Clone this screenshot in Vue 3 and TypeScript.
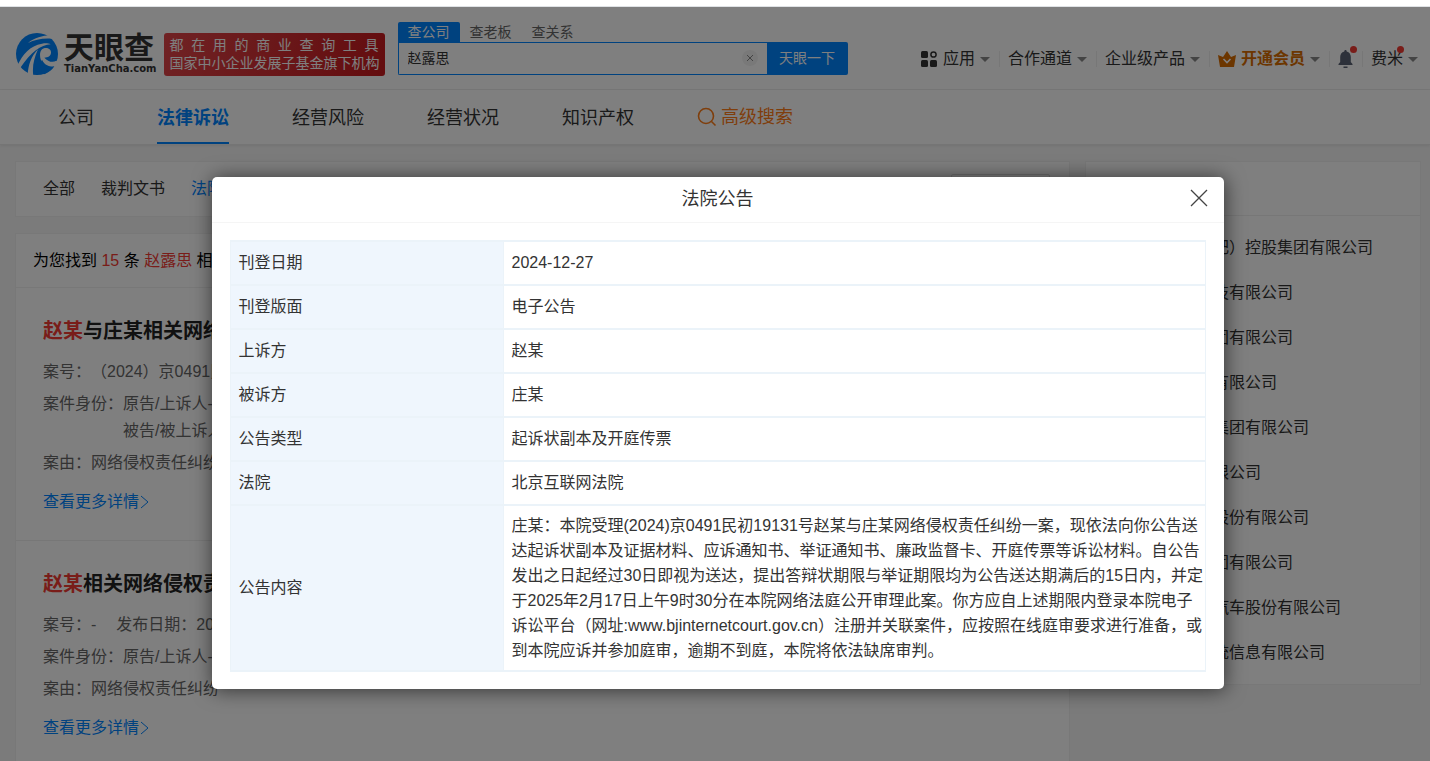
<script setup lang="ts">
import { ref } from 'vue'

interface CaseItem {
  rest: string
  meta: string[][]
  parties: string[]
}

const keyword = ref('赵露思')
const searchTabs = ['查公司', '查老板', '查关系']
const slogan = '都在用的商业查询工具'.split('')
const navItems = ['公司', '法律诉讼', '经营风险', '经营状况', '知识产权']
const filters = ['全部', '裁判文书', '法院公告']

const cases: CaseItem[] = [
  {
    rest: '与庄某相关网络侵权责任纠纷',
    meta: [['案号：', '（2024）京0491民初19131号']],
    parties: ['原告/上诉人-赵某', '被告/被上诉人-庄某'],
  },
  {
    rest: '相关网络侵权责任纠纷',
    meta: [['案号：', '-'], ['发布日期：', '2024-12-27']],
    parties: ['原告/上诉人-赵某'],
  },
]

const companies = [
  '某某新能源（合肥）控股集团有限公司',
  '某某网络信息科技有限公司',
  '某某投资控股集团有限公司',
  '某某某影视文化有限公司',
  '北京某某房地产集团有限公司',
  '某某科技发展有限公司',
  '上海某某半导体股份有限公司',
  '深圳某某控股集团有限公司',
  '重庆某某新能源汽车股份有限公司',
  '北京某某科技系统信息有限公司',
]

const details = [
  ['刊登日期', '2024-12-27'],
  ['刊登版面', '电子公告'],
  ['上诉方', '赵某'],
  ['被诉方', '庄某'],
  ['公告类型', '起诉状副本及开庭传票'],
  ['法院', '北京互联网法院'],
]

const notice = [
  '庄某：本院受理(2024)京0491民初19131号赵某与庄某网络侵权责任纠纷一案，现依法向你公告送',
  '达起诉状副本及证据材料、应诉通知书、举证通知书、廉政监督卡、开庭传票等诉讼材料。自公告',
  '发出之日起经过30日即视为送达，提出答辩状期限与举证期限均为公告送达期满后的15日内，并定',
  '于2025年2月17日上午9时30分在本院网络法庭公开审理此案。你方应自上述期限内登录本院电子',
  '诉讼平台（网址:www.bjinternetcourt.gov.cn）注册并关联案件，应按照在线庭审要求进行准备，或',
  '到本院应诉并参加庭审，逾期不到庭，本院将依法缺席审判。',
]
</script>

<template>
  <div class="window">
    <div class="strip"></div>
    <div class="page">
      <header class="top">
        <a class="logo" href="#" aria-label="天眼查">
          <svg class="mark" viewBox="6 6 126 126" aria-hidden="true">
            <circle cx="69" cy="69" r="63" fill="#0084ff" />
            <path d="M108 13 C86 14 62 20 42 36 C62 26 86 21 112 23 L126 12Z" fill="#fff" />
            <path d="M10 104 C26 70 48 44 84 38 C96 36 103 37 110 40 C80 42 52 62 18 112Z" fill="#fff" />
            <path d="M41 134 C42 104 51 76 72 55 C60 82 54 106 58 136Z" fill="#fff" />
            <path d="M84 55 C96 46 112 53 111 65 C110 75 102 79 91 80 C102 92 116 96 127 89 L136 98 L121 109 C100 110 84 101 80 85 C77 74 77 62 84 55Z" fill="#fff" />
            <path d="M84 86 C92 103 106 107 121 106 C113 119 99 128 89 130 C78 118 76 98 84 86Z" fill="#0084ff" />
          </svg>
          <span class="wordmark">
            <strong>天眼查</strong>
            <small>TianYanCha.com</small>
          </span>
        </a>
        <div class="banner">
          <div class="slogan"><span v-for="c in slogan" :key="c">{{ c }}</span></div>
          <div class="slogan"><span>国家中小企业发展子基金旗下机构</span></div>
        </div>
        <form class="search" @submit.prevent>
          <div class="search-tabs">
            <button v-for="(t, i) in searchTabs" :key="t" type="button" :class="{ on: i === 0 }">{{ t }}</button>
          </div>
          <div class="search-row">
            <div class="field">
              <input v-model="keyword" type="text" aria-label="搜索关键词" />
              <button class="clear" type="button" aria-label="清空" @click="keyword = ''">
                <svg viewBox="0 0 8 8"><path d="M1 1 L7 7 M7 1 L1 7" /></svg>
              </button>
            </div>
            <button class="go" type="submit">天眼一下</button>
          </div>
        </form>
        <div class="tools">
          <a class="tool" href="#">
            <svg class="apps" viewBox="0 0 16 16" aria-hidden="true">
              <rect x="0" y="0" width="7" height="7" rx="1.5" />
              <rect x="0" y="9" width="7" height="7" rx="1.5" />
              <rect x="9" y="9" width="7" height="7" rx="1.5" />
              <circle cx="12.5" cy="3.5" r="2.6" fill="none" stroke="#333" stroke-width="1.5" />
            </svg>
            应用<i class="caret"></i>
          </a>
          <a class="tool" href="#">合作通道<i class="caret"></i></a>
          <a class="tool" href="#">企业级产品<i class="caret"></i></a>
          <a class="tool vip" href="#">
            <svg class="crown" viewBox="0 0 18 16" aria-hidden="true">
              <path d="M0 4 L5 6 L9 0 L13 6 L18 4 L16 16 H2Z" />
              <path d="M5.500 8 L9 11.500 L12.500 8" fill="none" stroke="#fff" stroke-width="1.6" />
            </svg>
            开通会员<i class="caret"></i>
          </a>
          <a class="tool bell" href="#" aria-label="消息">
            <svg viewBox="0 0 14 18" aria-hidden="true">
              <path d="M7 0 C7.800 0 8.200 .6 8.200 1.400 C11 2 12.300 4.300 12.300 7 V12 L14 14 V15 H0 V14 L1.700 12 V7 C1.700 4.300 3 2 5.800 1.400 C5.800 .6 6.200 0 7 0Z M5 16.500 H9 V18 H5Z" />
            </svg>
            <b class="dot"></b>
          </a>
          <a class="tool user" href="#"><span class="name">费米<b class="dot"></b></span><i class="caret"></i></a>
        </div>
      </header>

      <nav class="nav">
        <a v-for="(n, i) in navItems" :key="n" href="#" :class="{ on: i === 1 }">{{ n }}</a>
        <a class="advanced" href="#">
          <svg viewBox="0 0 20 20" aria-hidden="true"><circle cx="9" cy="9" r="7.500" /><path d="M14.500 14.500 L18.500 18.500" /></svg>高级搜索
        </a>
      </nav>

      <div class="columns">
        <main>
          <section class="card filters">
            <a v-for="(f, i) in filters" :key="f" href="#" :class="{ on: i === 2 }">{{ f }}</a>
            <select aria-label="年份"><option>全部年份</option></select>
          </section>
          <section class="card results">
            <p class="summary">为您找到 <em>15</em> 条 <em>赵露思</em> 相关结果</p>
            <article v-for="(c, i) in cases" :key="i">
              <h2><em>赵某</em>{{ c.rest }}</h2>
              <div class="meta">
                <span v-for="m in c.meta" :key="m[0]" class="pair"><span>{{ m[0] }}</span><span>{{ m[1] }}</span></span>
              </div>
              <div class="meta">
                <span>案件身份：</span>
                <div><div v-for="p in c.parties" :key="p">{{ p }}</div></div>
              </div>
              <div class="meta"><span>案由：</span><span>网络侵权责任纠纷</span></div>
              <a class="more" href="#">查看更多详情<svg viewBox="0 0 9 14" aria-hidden="true"><path d="M1 1 L8 7 L1 13" /></svg></a>
            </article>
          </section>
        </main>
        <aside class="card">
          <div class="side-head"></div>
          <ul>
            <li v-for="c in companies" :key="c"><a href="#">{{ c }}</a></li>
          </ul>
        </aside>
      </div>

      <div class="overlay">
        <div class="modal" role="dialog" aria-modal="true" aria-labelledby="dialog-title">
          <div class="modal-head">
            <h1 id="dialog-title">法院公告</h1>
            <button class="close" type="button" aria-label="关闭">
              <svg viewBox="0 0 18 18"><path d="M1 1 L17 17 M17 1 L1 17" /></svg>
            </button>
          </div>
          <div class="modal-body">
            <table>
              <tbody>
                <tr v-for="d in details" :key="d[0]">
                  <th scope="row">{{ d[0] }}</th>
                  <td>{{ d[1] }}</td>
                </tr>
                <tr class="long">
                  <th scope="row">公告内容</th>
                  <td><div v-for="l in notice" :key="l">{{ l }}</div></td>
                </tr>
              </tbody>
            </table>
          </div>
        </div>
      </div>
    </div>
  </div>
</template>

<style>
body {
  margin: 0;
  overflow: hidden;
}
</style>

<style scoped>
* {
  box-sizing: border-box;
}
.window {
  height: 100vh;
  display: flex;
  flex-direction: column;
  overflow: hidden;
  font: 16px/24px "Liberation Sans", "Noto Sans CJK SC", sans-serif;
  color: #333;
}
.window a {
  color: inherit;
  text-decoration: none;
}
.window button,
.window input {
  font: inherit;
  border: 0;
  padding: 0;
}
.strip {
  flex: none;
  height: 7px;
  background: #fff;
  border-bottom: 1px solid #dfe2e5;
}
.page {
  flex: 1;
  min-height: 0;
  position: relative;
  overflow: hidden;
  background: #f7f7f7;
}
.top {
  height: 83px;
  display: flex;
  align-items: center;
  padding: 0 12px 0 16px;
  background: #fff;
  border-bottom: 1px solid #eee;
  white-space: nowrap;
}
.logo {
  display: flex;
  align-items: center;
  gap: 6px;
  margin-top: 12px;
}
.mark {
  width: 42px;
  height: 42px;
}
.wordmark {
  display: flex;
  flex-direction: column;
}
.wordmark strong {
  font-size: 30px;
  line-height: 30px;
}
.wordmark small {
  font: bold 10px/12px "DejaVu Sans", sans-serif;
}
.banner {
  width: 221px;
  margin: 12px 13px 0 7px;
  padding: 3px 6px 4px;
  border-radius: 3px;
  background: linear-gradient(100deg, #e04448, #c81a1e);
  color: #fff;
  font-size: 14px;
  line-height: 18px;
}
.slogan {
  display: flex;
  justify-content: space-between;
}
.search {
  width: 450px;
}
.search-tabs {
  display: flex;
  height: 20px;
}
.search .search-tabs button {
  width: 62px;
  background: none;
  color: #666;
  font-size: 14px;
  line-height: 18px;
  border-radius: 2px 2px 0 0;
}
.search .search-tabs .on {
  background: #0084ff;
  color: #fff;
}
.search-row {
  display: flex;
  height: 33px;
}
.field {
  flex: 1;
  display: flex;
  align-items: center;
  padding: 0 9px;
  border: 1px solid #0084ff;
  border-right: 0;
  border-radius: 0 0 0 2px;
}
.field input {
  flex: 1;
  min-width: 0;
  font-size: 14px;
  color: #333;
  background: none;
  outline: 0;
}
.field .clear {
  width: 16px;
  height: 16px;
  display: grid;
  place-items: center;
  border-radius: 50%;
  background: #f3f3f3;
}
.clear svg {
  width: 8px;
  height: 8px;
  stroke: #888;
}
.search .go {
  width: 81px;
  background: #0084ff;
  color: #fff;
  font-size: 14px;
  border-radius: 0 2px 2px 0;
}
.tools {
  margin: 22px 0 0 auto;
  display: flex;
  align-items: center;
}
.tool {
  display: flex;
  align-items: center;
}
.tool + .tool {
  margin-left: 9px;
  padding-left: 9px;
  background: linear-gradient(#eee, #eee) left / 1px 16px no-repeat;
}
.caret {
  margin-left: 5px;
  border: 5px solid transparent;
  border-top-color: #888;
  border-bottom: 0;
}
.apps {
  width: 16px;
  height: 16px;
  margin-right: 6px;
  fill: #333;
}
.tools .vip {
  color: #d96c00;
  font-weight: bold;
}
.crown {
  width: 18px;
  height: 16px;
  margin-right: 5px;
  fill: #d96c00;
}
.bell svg {
  width: 15px;
  height: 18px;
  fill: #5b6374;
}
.bell,
.name {
  position: relative;
}
.dot {
  position: absolute;
  top: -4px;
  right: -4px;
  width: 7px;
  height: 7px;
  border-radius: 50%;
  background: #f33a33;
}
.name .dot {
  top: -1px;
  right: -1px;
}
.nav {
  height: 55px;
  display: flex;
  align-items: stretch;
  gap: 63px;
  padding-left: 58px;
  background: #fff;
  border-bottom: 1px solid #eaeaea;
  box-shadow: 0 1px 3px rgba(0, 0, 0, 0.08);
  font-size: 18px;
  line-height: 56px;
}
.nav .on {
  color: #0084ff;
  font-weight: bold;
  box-shadow: inset 0 -2px #0084ff;
}
.nav .advanced {
  display: flex;
  align-items: center;
  gap: 4px;
  color: #ff7d18;
}
.advanced svg {
  width: 20px;
  height: 20px;
  fill: none;
  stroke: #ff7d18;
  stroke-width: 1.6;
}
.columns {
  display: grid;
  grid-template-columns: minmax(0, 1fr) 334px;
  align-items: start;
  gap: 17px;
  padding: 17px 10px 0 16px;
}
.card {
  background: #fff;
  box-shadow: 0 0 0 1px #f0f0f0;
}
.filters {
  display: flex;
  align-items: center;
  gap: 26px;
  height: 54px;
  margin-bottom: 18px;
  padding: 0 19px 0 27px;
}
.filters a {
  line-height: 26px;
}
.filters .on {
  color: #0084ff;
}
.filters select {
  width: 99px;
  height: 30px;
  margin-left: auto;
  border: 1px solid #ddd;
  border-radius: 2px;
  background: #fff;
  color: inherit;
  font: inherit;
}
.window em {
  color: #f33a33;
  font-style: normal;
}
.summary {
  margin: 0;
  padding: 0 17px;
  color: #000;
  line-height: 53px;
  border-bottom: 1px solid #f0f0f0;
}
article {
  padding: 28px 27px 25px;
  border-bottom: 1px solid #eee;
  color: #666;
  line-height: 27px;
}
h2 {
  margin: 0 0 12px;
  color: #222;
  font-size: 20px;
  line-height: 30px;
}
.meta {
  display: flex;
  margin-bottom: 5px;
}
.pair {
  display: flex;
  margin-right: 20px;
}
article .more {
  display: flex;
  align-items: center;
  gap: 1px;
  margin-top: 12px;
  color: #0084ff;
}
.more svg {
  width: 9px;
  height: 14px;
  fill: none;
  stroke: #0084ff;
}
.side-head {
  height: 54px;
  border-bottom: 1px solid #eee;
}
ul {
  margin: 0;
  padding: 9px 15px;
  list-style: none;
  line-height: 45px;
}
.overlay {
  position: absolute;
  inset: 0;
  display: flex;
  justify-content: center;
  align-items: flex-start;
  padding: 170px 0 0 5px;
  background: rgba(0, 0, 0, 0.5);
}
.modal {
  width: 90%;
  max-width: 1012px;
  background: #fff;
  border-radius: 5px;
  box-shadow: 1px 1px 20px rgba(0, 0, 0, 0.6);
}
.modal-head {
  position: relative;
  height: 46px;
  border-bottom: 1px solid #f5f5f5;
}
h1 {
  margin: 0;
  font-size: 18px;
  line-height: 44px;
  font-weight: normal;
  text-align: center;
}
.modal-head .close {
  position: absolute;
  top: 12px;
  right: 16px;
  width: 18px;
  height: 18px;
  background: none;
}
.close svg {
  display: block;
  fill: none;
  stroke: #444;
  stroke-width: 1.3;
}
.modal-body {
  padding: 17px 18px;
}
table {
  width: 100%;
  table-layout: fixed;
  border-collapse: collapse;
}
th,
td {
  height: 44px;
  padding: 0 0 0 8px;
  border: 1px solid #ebf3f9;
  border-width: 2px 1px;
  font-weight: normal;
  text-align: left;
}
th {
  width: 28%;
  background: #eff6fd;
}
.long td {
  padding: 7px 0 7px 8px;
  line-height: 25px;
  white-space: nowrap;
}
</style>
